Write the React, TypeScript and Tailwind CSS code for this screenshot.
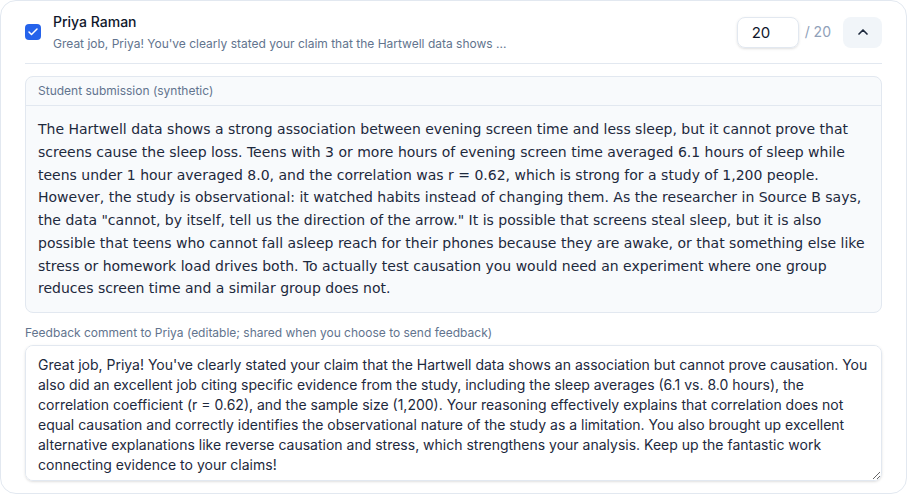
import { Check, ChevronUp } from "lucide-react";

const submission =
  'The Hartwell data shows a strong association between evening screen time and less sleep, but it cannot prove that screens cause the sleep loss. Teens with 3 or more hours of evening screen time averaged 6.1 hours of sleep while teens under 1 hour averaged 8.0, and the correlation was r = 0.62, which is strong for a study of 1,200 people. However, the study is observational: it watched habits instead of changing them. As the researcher in Source B says, the data "cannot, by itself, tell us the direction of the arrow." It is possible that screens steal sleep, but it is also possible that teens who cannot fall asleep reach for their phones because they are awake, or that something else like stress or homework load drives both. To actually test causation you would need an experiment where one group reduces screen time and a similar group does not.';

const feedback =
  "Great job, Priya! You've clearly stated your claim that the Hartwell data shows an association but cannot prove causation. You also did an excellent job citing specific evidence from the study, including the sleep averages (6.1 vs. 8.0 hours), the correlation coefficient (r = 0.62), and the sample size (1,200). Your reasoning effectively explains that correlation does not equal causation and correctly identifies the observational nature of the study as a limitation. You also brought up excellent alternative explanations like reverse causation and stress, which strengthens your analysis. Keep up the fantastic work connecting evidence to your claims!";

export default function App() {
  return (
    <div className="w-[908px] h-[494px] bg-white font-['Inter',sans-serif]">
      <div className="w-[907px] h-full rounded-2xl border border-slate-200 bg-white px-6 pt-[11px] pb-3 flex flex-col">
        {/* Header row */}
        <div className="flex items-center gap-3">
          <div className="w-4 h-4 rounded-[4px] bg-[#2563eb] flex items-center justify-center shrink-0">
            <Check className="w-3 h-3 text-white" strokeWidth={3} />
          </div>
          <div className="flex-1 min-w-0">
            <div className="text-sm leading-5 font-medium text-slate-900">Priya Raman</div>
            <div className="mt-1 text-xs leading-4 text-slate-500">
              Great job, Priya! You've clearly stated your claim that the Hartwell data shows ...
            </div>
          </div>
          <div className="flex items-center gap-[6px]">
            <input
              defaultValue="20"
              className="w-[62px] h-[31px] rounded-lg border border-slate-200 shadow-sm px-[14px] text-[15px] text-slate-900 outline-none"
            />
            <span className="text-sm text-slate-400">/ 20</span>
          </div>
          <button className="w-[39px] h-[31px] rounded-lg bg-slate-100 flex items-center justify-center text-slate-800">
            <ChevronUp className="w-4 h-4" strokeWidth={2.5} />
          </button>
        </div>

        <div className="mt-[11px] border-t border-slate-200" />

        {/* Submission */}
        <div className="mt-3 rounded-lg border border-slate-200 bg-slate-50">
          <div className="px-3 py-1.5 text-xs leading-4 text-slate-500 border-b border-slate-200">
            Student submission (synthetic)
          </div>
          <p className="p-3 text-sm leading-[22.75px] text-slate-800 font-['DejaVu_Sans',sans-serif]">
            {submission}
          </p>
        </div>

        {/* Feedback */}
        <label className="mt-3 text-xs leading-4 text-slate-500">
          Feedback comment to Priya (editable; shared when you choose to send feedback)
        </label>
        <textarea
          defaultValue={feedback}
          className="mt-1 h-[136px] w-full rounded-lg border border-slate-200 shadow-sm bg-white px-3 py-[9px] text-sm leading-5 text-slate-800 outline-none"
        />
      </div>
    </div>
  );
}
